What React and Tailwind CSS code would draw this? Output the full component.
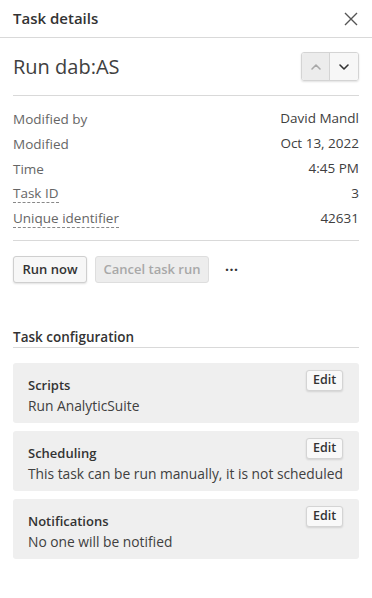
import React from 'react';

const rows = [
  { label: 'Modified by', value: 'David Mandl' },
  { label: 'Modified', value: 'Oct 13, 2022' },
  { label: 'Time', value: '4:45 PM' },
  { label: 'Task ID', value: '3', dashed: true },
  { label: 'Unique identifier', value: '42631', dashed: true },
];

const sections = [
  { title: 'Scripts', text: 'Run AnalyticSuite' },
  { title: 'Scheduling', text: 'This task can be run manually, it is not scheduled' },
  { title: 'Notifications', text: 'No one will be notified' },
];

function Chevron({ up, color }) {
  return (
    <svg width="12" height="12" viewBox="0 0 12 12" fill="none">
      <path
        d={up ? 'M2 8l4-4 4 4' : 'M2 4l4 4 4-4'}
        stroke={color}
        strokeWidth="1.6"
        strokeLinecap="round"
        strokeLinejoin="round"
      />
    </svg>
  );
}

export default function App() {
  return (
    <div className="w-[372px] h-[598px] bg-white text-[#404040] font-['Open_Sans',sans-serif]">
      {/* header */}
      <div className="h-[38px] flex items-center justify-between pl-[13px] pr-[14px] border-b border-[#d9d9d9]">
        <h1 className="text-[15px] font-semibold text-[#333]">Task details</h1>
        <svg width="14" height="14" viewBox="0 0 14 14" className="text-[#555]">
          <path d="M1 1l12 12M13 1L1 13" stroke="currentColor" strokeWidth="1.4" />
        </svg>
      </div>

      <div className="px-[13px]">
        {/* title */}
        <div className="flex items-center justify-between h-[58px] border-b border-[#d9d9d9]">
          <h2 className="text-[20px] text-[#404040]">Run dab:AS</h2>
          <div className="flex rounded-[3px] border border-[#d4d4d4] shadow-[0_1px_2px_rgba(0,0,0,0.12)] overflow-hidden">
            <button className="w-[28px] h-[27px] flex items-center justify-center bg-[#ececec] border-r border-[#d4d4d4]">
              <Chevron up color="#a8a8a8" />
            </button>
            <button className="w-[28px] h-[27px] flex items-center justify-center bg-[#f7f7f7]">
              <Chevron color="#333" />
            </button>
          </div>
        </div>

        {/* properties */}
        <div className="pt-[10px] pb-[9px] border-b border-[#d9d9d9]">
          {rows.map((r) => (
            <div key={r.label} className="h-[25px] flex items-center justify-between text-[13.5px]">
              <span
                className={
                  'text-[#666] leading-[18px] ' +
                  (r.dashed ? 'border-b border-dashed border-[#888]' : '')
                }
              >
                {r.label}
              </span>
              <span className="text-[#404040]">{r.value}</span>
            </div>
          ))}
        </div>

        {/* actions */}
        <div className="flex items-center gap-2 mt-[15px]">
          <button className="h-[27px] w-[74px] rounded-[3px] border border-[#cfcfcf] bg-[#f7f7f7] shadow-[0_1px_2px_rgba(0,0,0,0.12)] text-[13px] font-semibold text-[#333]">
            Run now
          </button>
          <button className="h-[27px] w-[114px] rounded-[3px] border border-[#dedede] bg-[#ededed] text-[13px] font-semibold text-[#a8a8a8]">
            Cancel task run
          </button>
          <span className="ml-[8px] text-[14px] font-bold text-[#333] leading-none tracking-[0.5px]">···</span>
        </div>

        {/* config */}
        <div className="mt-[45px] pb-[1px] border-b border-[#d9d9d9]">
          <h3 className="text-[13.5px] leading-[18px] font-semibold text-[#333]">Task configuration</h3>
        </div>

        <div className="mt-[15px] flex flex-col gap-[8px]">
          {sections.map((s) => (
            <div key={s.title} className="relative h-[60px] rounded-[3px] bg-[#efefef] pl-[15px] pt-[12px]">
              <div className="text-[13px] font-semibold text-[#333] leading-[20px]">{s.title}</div>
              <div className="text-[13.8px] text-[#404040] leading-[22px]">{s.text}</div>
              <button className="absolute top-[7px] right-[16px] h-[21px] w-[37px] rounded-[3px] border border-[#d4d4d4] bg-[#f9f9f9] shadow-[0_1px_2px_rgba(0,0,0,0.12)] text-[12.5px] font-semibold text-[#333]">
                Edit
              </button>
            </div>
          ))}
        </div>
      </div>
    </div>
  );
}
